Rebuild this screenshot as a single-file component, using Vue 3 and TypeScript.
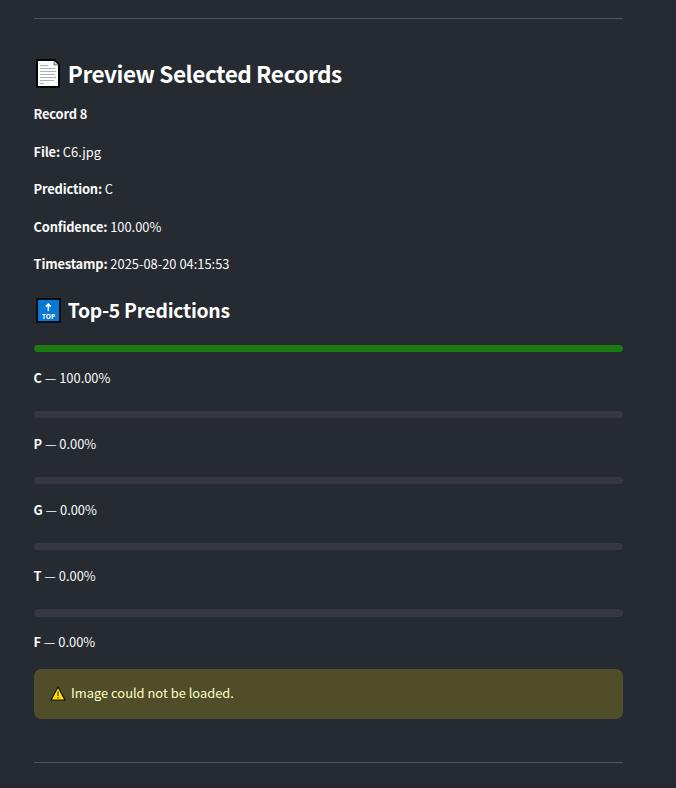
<script setup lang="ts">
interface Field {
  label: string
  value: string
}
interface Prediction {
  label: string
  score: number
}

const fields: Field[] = [
  { label: 'File:', value: 'C6.jpg' },
  { label: 'Prediction:', value: 'C' },
  { label: 'Confidence:', value: '100.00%' },
  { label: 'Timestamp:', value: '2025-08-20 04:15:53' },
]

const predictions: Prediction[] = [
  { label: 'C', score: 100 },
  { label: 'P', score: 0 },
  { label: 'G', score: 0 },
  { label: 'T', score: 0 },
  { label: 'F', score: 0 },
]
</script>

<template>
  <main class="page">
    <hr class="rule" />
    <h3 class="title">
      <svg class="page-icon" viewBox="0 0 24 29" aria-hidden="true">
        <path d="M1 1H18.5L23 5.5V28H1Z" fill="#fbfbfb" stroke="#030405" stroke-width="2" />
        <path d="M18 1.5V6H23Z" fill="#d4d4d4" stroke="#030405" stroke-width=".5" />
        <path d="M4 6.5H12M4 9.5H19M4 12.5H20M4 15.5H19M4 18.5H20M4 21.5H18M4 24.5H8" stroke="#b0b0b0" stroke-width="1" />
      </svg>
      <span>Preview Selected Records</span>
    </h3>
    <section class="fields">
      <p class="text"><strong>Record 8</strong></p>
      <p v-for="f in fields" :key="f.label" class="text"><strong>{{ f.label }}</strong> {{ f.value }}</p>
    </section>
    <h4 class="subtitle">
      <svg class="top-icon" viewBox="0 0 25 25" aria-hidden="true">
        <rect x="1" y="1" width="23" height="23" fill="#0878d5" stroke="#020d18" stroke-width="2" />
        <path d="M12.3 13V6M9.8 8.6L12.3 6.1L14.8 8.6" fill="none" stroke="#fff" stroke-width="1.5" />
        <text x="12.5" y="20.5" text-anchor="middle" textLength="13" lengthAdjust="spacingAndGlyphs" class="top-label">TOP</text>
      </svg>
      <span>Top-5 Predictions</span>
    </h4>
    <section class="predictions">
      <div v-for="p in predictions" :key="p.label" class="prediction">
        <div class="track"><div class="fill" :style="{ width: p.score + '%' }"></div></div>
        <p class="text"><strong>{{ p.label }}</strong> — {{ p.score.toFixed(2) }}%</p>
      </div>
    </section>
    <div class="alert">
      <svg class="warn-icon" viewBox="0 0 16 15" aria-hidden="true">
        <path d="M8 1L15 14H1Z" fill="#ffe100" stroke="#151500" stroke-width="1.2" />
        <path d="M8 5.5V10M8 11V12.5" stroke="#3e3700" stroke-width="1.2" />
      </svg>
      <span class="alert-text">Image could not be loaded.</span>
    </div>
    <hr class="rule" />
    <footer class="edge"></footer>
  </main>
</template>

<style>
body {
  background: #262b32;
}
</style>

<style scoped>
.page {
  box-sizing: border-box;
  height: 788px;
  padding: 18px 53px 0 33.6px;
  overflow: hidden;
  display: flex;
  flex-direction: column;
  background: #262b32;
  color: #fafafa;
  font-family: "Noto Sans CJK SC", "Noto Sans", sans-serif;
  font-size: 12.9px;
  line-height: 23.04px;
}
.page > * {
  flex: none;
}
.rule {
  width: 100%;
  height: 1px;
  margin: 0;
  border: 0;
  background: #51555b;
}
.title,
.subtitle {
  display: flex;
  align-items: center;
  margin: 0;
  font-weight: 600;
  color: #fff;
}
.title {
  height: 36px;
  margin-top: 37px;
  font-size: 22.56px;
  letter-spacing: -0.44px;
}
.page-icon {
  width: 24px;
  height: 29px;
  margin: 0 7.8px 1px 2.4px;
}
.fields {
  display: flex;
  flex-direction: column;
  gap: 14.4px;
  margin-top: 10.35px;
}
.text {
  margin: 0;
  height: 23.04px;
  white-space: pre-wrap;
}
strong {
  font-weight: 600;
  letter-spacing: -0.18px;
}
.subtitle {
  height: 34px;
  margin-top: 18.15px;
  font-size: 19.34px;
  letter-spacing: -0.27px;
}
.top-icon {
  width: 25px;
  height: 25px;
  margin: 0 6.7px 0 2.4px;
}
.top-label {
  font: 700 7px "Open Sans", sans-serif;
  letter-spacing: 0;
  fill: #fff;
}
.predictions {
  display: flex;
  flex-direction: column;
  gap: 22.21px;
  margin-top: 17.7px;
}
.track {
  height: 7.2px;
  margin-bottom: 13.7px;
  border-radius: 4px;
  overflow: hidden;
  background: #373740;
}
.fill {
  height: 100%;
  border-radius: 4px;
  background: #197b10;
}
.alert {
  display: flex;
  align-items: center;
  box-sizing: border-box;
  height: 50px;
  margin: 15.5px 0 43px;
  padding: 0 16.4px;
  border-radius: 7.2px;
  background: #504d2b;
  color: #ffffc2;
}
.warn-icon {
  width: 16px;
  height: 15px;
  margin: 0 5px 1px 0;
}
.alert-text {
  padding-bottom: 3px;
}
.edge {
  height: 4px;
  margin: 21px -53px 0 -34px;
  background: #262730;
}
</style>
